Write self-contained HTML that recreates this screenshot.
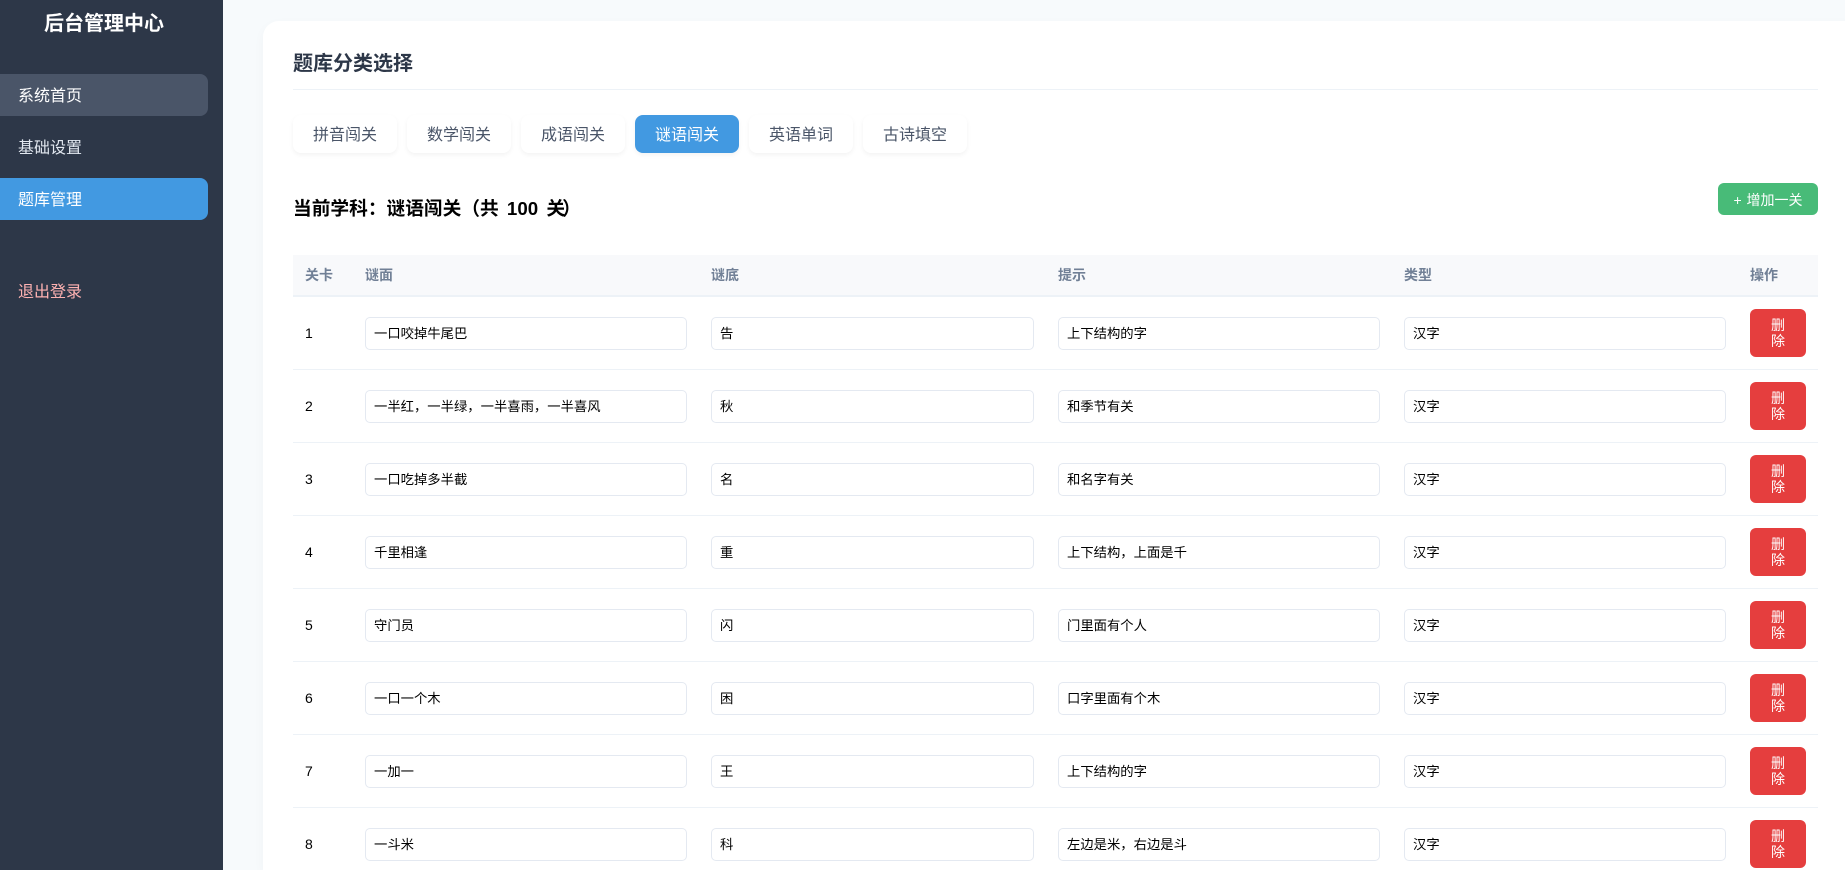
<!DOCTYPE html>
<html lang="zh-CN">
<head>
<meta charset="utf-8">
<title>后台管理中心</title>
<style>
*{box-sizing:border-box;margin:0;padding:0}
html,body{width:1845px;height:870px;overflow:hidden;background:#f7fafc;font-family:"Liberation Sans","WenQuanYi Zen Hei","Noto Sans CJK SC",sans-serif;position:relative}
.a,.side,.card,.nav,.tab,.row,.row>div,.h{position:absolute}
.side{left:0;top:0;width:223px;height:870px;background:#2d3748}
.logo{position:absolute;left:0;width:208px;top:12px;line-height:24px;text-align:center;color:#fff;font-size:20px;font-weight:bold}
.nav{left:0;width:208px;height:42px;line-height:46px;padding-left:18px;font-size:16px;color:#e2e8f0;border-radius:0 8px 8px 0}
.card{left:263px;top:21px;width:1600px;height:849px;overflow:hidden;background:#fff;border-radius:16px 16px 0 0;box-shadow:0 4px 12px rgba(0,0,0,.03)}
.title{position:absolute;left:293px;top:52px;line-height:24px;font-size:20px;font-weight:bold;color:#2d3748}
.hr{position:absolute;left:293px;top:89px;width:1525px;height:1px;background:#edf2f7}
.tab{top:115px;width:104px;height:38px;line-height:41px;text-align:center;font-size:16px;color:#4a5568;background:#fff;border-radius:8px;box-shadow:0 2px 5px rgba(0,0,0,.05)}
.tab.on{background:#4299e1;color:#fff}
.cur{position:absolute;left:293px;top:198px;line-height:22px;font-size:18.72px;font-weight:bold;color:#000;white-space:pre;word-spacing:3px}
.cur span{margin-right:-3px}
.add{position:absolute;left:1718px;top:183px;width:100px;height:32px;line-height:34px;text-align:center;background:#48bb78;color:#fff;font-size:14px;word-spacing:1px;border-radius:6px}
.thead{position:absolute;left:293px;top:255px;width:1525px;height:42px;background:#f8f9fb;border-bottom:2px solid #edf2f7}
.h{top:266px;line-height:18px;font-size:14px;font-weight:bold;color:#718096}
.wrap{position:absolute;left:0;top:0;width:1845px;height:870px;overflow:hidden}
.row{left:293px;width:1525px;height:73px;border-bottom:1px solid #edf2f7}
.n{left:12px;top:28px;line-height:16px;font-size:14px;color:#000}
.i{top:20px;width:322px;height:33px;line-height:31px;padding-left:8px;font-size:13.33px;color:#000;background:#fff;border:1px solid #e4e9f1;border-radius:5px;white-space:nowrap}
.c1{left:72px}.c2{left:418px;width:323px}.c3{left:765px}.c4{left:1111px}
.del{left:1457px;top:12px;width:56px;height:48px;padding-top:8px;line-height:16px;text-align:center;font-size:14px;color:#fff;background:#e53e3e;border-radius:6px}
</style>
</head>
<body>
<div class="side">
  <div class="logo">后台管理中心</div>
  <div class="nav" style="top:74px;background:#4a5568;color:#fff">系统首页</div>
  <div class="nav" style="top:126px">基础设置</div>
  <div class="nav" style="top:178px;background:#4299e1;color:#fff">题库管理</div>
  <div class="nav" style="top:270px;color:#feb2b2">退出登录</div>
</div>
<div class="card"></div>
<div class="title">题库分类选择</div>
<div class="hr"></div>
<div class="tab" style="left:293px">拼音闯关</div>
<div class="tab" style="left:407px">数学闯关</div>
<div class="tab" style="left:521px">成语闯关</div>
<div class="tab on" style="left:635px">谜语闯关</div>
<div class="tab" style="left:749px">英语单词</div>
<div class="tab" style="left:863px">古诗填空</div>
<div class="cur">当前学科：谜语闯关（共 100 <span>关</span>）</div>
<div class="add">+ 增加一关</div>
<div class="thead"></div>
<div class="h" style="left:305px">关卡</div>
<div class="h" style="left:365px">谜面</div>
<div class="h" style="left:711px">谜底</div>
<div class="h" style="left:1058px">提示</div>
<div class="h" style="left:1404px">类型</div>
<div class="h" style="left:1750px">操作</div>
<div class="wrap">
<div class="row" style="top:297px"><div class="n">1</div><div class="i c1">一口咬掉牛尾巴</div><div class="i c2">告</div><div class="i c3">上下结构的字</div><div class="i c4">汉字</div><div class="del">删<br>除</div></div>
<div class="row" style="top:370px"><div class="n">2</div><div class="i c1">一半红，一半绿，一半喜雨，一半喜风</div><div class="i c2">秋</div><div class="i c3">和季节有关</div><div class="i c4">汉字</div><div class="del">删<br>除</div></div>
<div class="row" style="top:443px"><div class="n">3</div><div class="i c1">一口吃掉多半截</div><div class="i c2">名</div><div class="i c3">和名字有关</div><div class="i c4">汉字</div><div class="del">删<br>除</div></div>
<div class="row" style="top:516px"><div class="n">4</div><div class="i c1">千里相逢</div><div class="i c2">重</div><div class="i c3">上下结构，上面是千</div><div class="i c4">汉字</div><div class="del">删<br>除</div></div>
<div class="row" style="top:589px"><div class="n">5</div><div class="i c1">守门员</div><div class="i c2">闪</div><div class="i c3">门里面有个人</div><div class="i c4">汉字</div><div class="del">删<br>除</div></div>
<div class="row" style="top:662px"><div class="n">6</div><div class="i c1">一口一个木</div><div class="i c2">困</div><div class="i c3">口字里面有个木</div><div class="i c4">汉字</div><div class="del">删<br>除</div></div>
<div class="row" style="top:735px"><div class="n">7</div><div class="i c1">一加一</div><div class="i c2">王</div><div class="i c3">上下结构的字</div><div class="i c4">汉字</div><div class="del">删<br>除</div></div>
<div class="row" style="top:808px"><div class="n">8</div><div class="i c1">一斗米</div><div class="i c2">科</div><div class="i c3">左边是米，右边是斗</div><div class="i c4">汉字</div><div class="del">删<br>除</div></div>
</div>
</body>
</html>
